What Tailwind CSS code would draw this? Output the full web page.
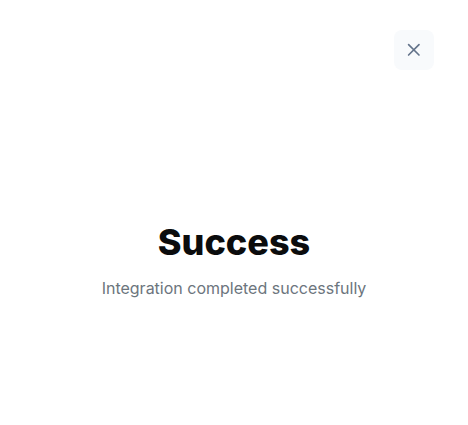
<!DOCTYPE html>
<html lang="en">
<head>
<meta charset="utf-8">
<meta name="viewport" content="width=device-width, initial-scale=1">
<title>Success</title>
<script src="https://cdn.jsdelivr.net/npm/@tailwindcss/browser@4"></script>
</head>
<body class="bg-white font-['Inter','Liberation_Sans',sans-serif]">
<main class="flex min-h-screen flex-col px-[34px] py-[30px]">
  <button type="button" aria-label="Close" class="flex size-10 items-center justify-center self-end rounded-lg bg-slate-50 text-[#64748b]">
    <svg class="size-5" viewBox="0 0 20 20" fill="none" stroke="currentColor" stroke-width="1.67" stroke-linecap="round" stroke-linejoin="round" aria-hidden="true"><path d="M15 4.6 4.6 15M4.6 4.6 15 15"/></svg>
  </button>
  <section class="mt-[148px] flex flex-col items-center gap-2.5 text-center">
    <h1 class="text-4xl leading-12 font-extrabold text-[#0b0c0d]">Success</h1>
    <p class="text-base leading-6 text-[#6c757d]">Integration completed successfully</p>
  </section>
</main>
</body>
</html>
